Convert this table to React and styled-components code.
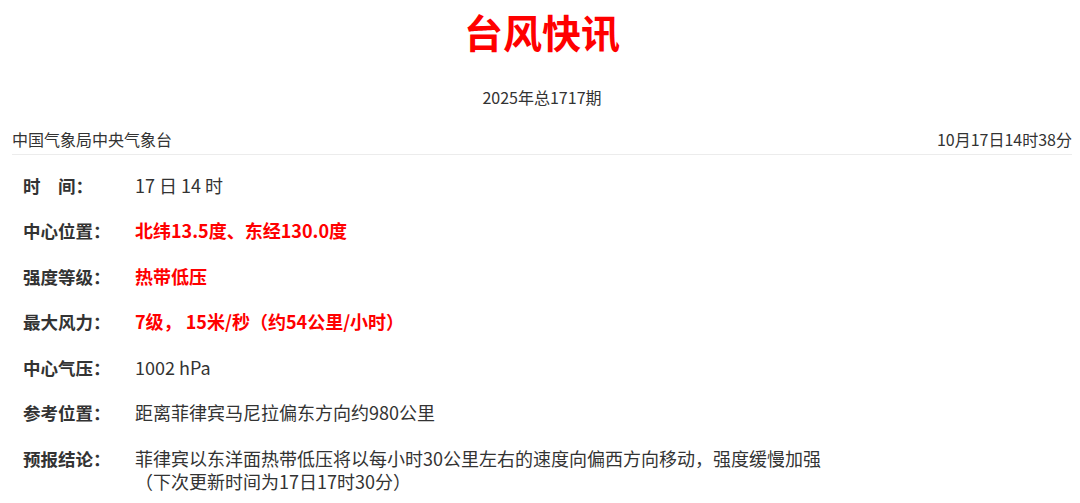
import React from 'react'
import styled, { createGlobalStyle } from 'styled-components'

const GlobalStyle = createGlobalStyle`
    body {
        margin: 0;
        background: #fff;
        font-family: 'Noto Sans CJK SC', 'Noto Sans', sans-serif;
        color: #333;
    }
`

const Page = styled.div`
    width: 1080px;
    padding: 0 8px 0 12px;
    box-sizing: border-box;
`

const Title = styled.h1`
    margin: 0;
    height: 64px;
    line-height: 62px;
    text-align: center;
    font-size: 39px;
    font-weight: 700;
    color: #ff0000;
`

const Issue = styled.div`
    margin-top: 21px;
    line-height: 24px;
    text-align: center;
    font-size: 16px;
    color: #333;
`

const Header = styled.div`
    margin-top: 18px;
    display: flex;
    justify-content: space-between;
    line-height: 24px;
    font-size: 16px;
    padding-bottom: 3px;
    border-bottom: 1px solid #ececec;
`

const List = styled.div`
    display: flex;
    flex-direction: column;
    gap: 22.5px;
    padding: 18.5px 0 0 11px;
`

const Row = styled.div`
    display: flex;
    font-size: 17.5px;
    line-height: 23px;
`

const Label = styled.div`
    flex: 0 0 112px;
    font-weight: 700;
    color: #333;
    white-space: pre;
`

const Value = styled.div`
    flex: 1;
    font-size: 18px;
    color: ${props => (props.$alert ? '#ff0000' : '#333')};
    font-weight: ${props => (props.$alert ? 700 : 400)};
`

const rows = [
    { label: '时\u3000间：', value: '17 日 14 时' },
    { label: '中心位置：', value: '北纬13.5度、东经130.0度', alert: true },
    { label: '强度等级：', value: '热带低压', alert: true },
    { label: '最大风力：', value: '7级， 15米/秒（约54公里/小时）', alert: true },
    { label: '中心气压：', value: '1002 hPa' },
    { label: '参考位置：', value: '距离菲律宾马尼拉偏东方向约980公里' },
    {
        label: '预报结论：',
        value: (
            <>
                菲律宾以东洋面热带低压将以每小时30公里左右的速度向偏西方向移动，强度缓慢加强
                <br />
                （下次更新时间为17日17时30分）
            </>
        ),
    },
]

const App = () => {
  return (
    <Page>
        <GlobalStyle />
        <Title>台风快讯</Title>
        <Issue>2025年总1717期</Issue>
        <Header>
            <span>中国气象局中央气象台</span>
            <span>10月17日14时38分</span>
        </Header>
        <List>
            {rows.map(r => (
                <Row key={r.label}>
                    <Label>{r.label}</Label>
                    <Value $alert={r.alert}>{r.value}</Value>
                </Row>
            ))}
        </List>
    </Page>
  )
}

export default App
